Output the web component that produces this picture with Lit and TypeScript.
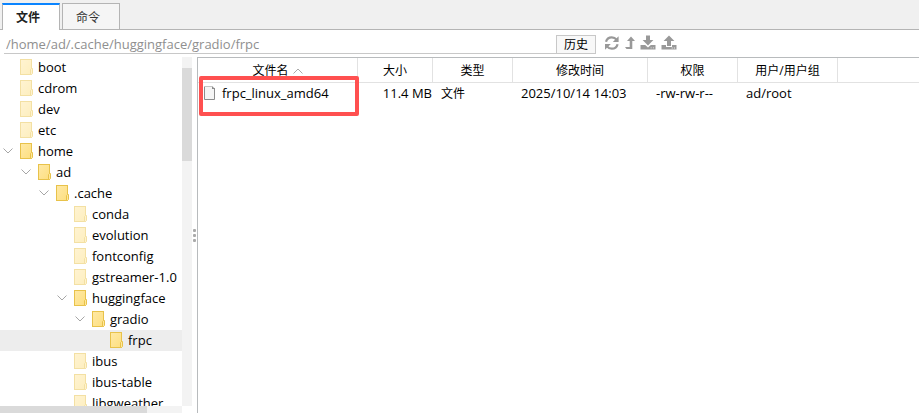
import { LitElement, html, css, svg } from "lit";
import { customElement, state } from "lit/decorators.js";
import { classMap } from "lit/directives/class-map.js";
import { styleMap } from "lit/directives/style-map.js";

interface TreeNode {
  name: string;
  depth: number;
  open?: boolean;
  visited?: boolean;
}

const NODES: TreeNode[] = [
  { name: "boot", depth: 0 },
  { name: "cdrom", depth: 0 },
  { name: "dev", depth: 0 },
  { name: "etc", depth: 0 },
  { name: "home", depth: 0, open: true, visited: true },
  { name: "ad", depth: 1, open: true, visited: true },
  { name: ".cache", depth: 2, open: true, visited: true },
  { name: "conda", depth: 3 },
  { name: "evolution", depth: 3 },
  { name: "fontconfig", depth: 3 },
  { name: "gstreamer-1.0", depth: 3 },
  { name: "huggingface", depth: 3, open: true, visited: true },
  { name: "gradio", depth: 4, open: true, visited: true },
  { name: "frpc", depth: 5, visited: true },
  { name: "ibus", depth: 3 },
  { name: "ibus-table", depth: 3 },
  { name: "libgweather", depth: 3 },
];

const chevron = html`<svg width="10" height="6" viewBox="0 0 10 6">
  <path d="M0.5 0.5 L5 5 L9.5 0.5" fill="none" stroke="#a6a6a6" />
</svg>`;

const folder = html`<svg width="13" height="16" viewBox="0 0 13 16">
  <defs>
    <linearGradient id="fold" x1="0" y1="0" x2="1" y2="1">
      <stop offset="0" stop-color="#ffe9a6" />
      <stop offset="1" stop-color="#fddf80" />
    </linearGradient>
  </defs>
  <rect x="0.5" y="0.5" width="11" height="15" fill="url(#fold)" stroke="#e8c24a" />
  <path d="M10.5 15.5 V10.5 L11.5 9.5 H12.5 V14.5 L11.5 15.5 Z" fill="#ffe89c" stroke="#e8c24a" />
</svg>`;

const toolIcon = (body: unknown, width = 16) =>
  html`<svg width=${width} height="16" viewBox="0 0 ${width} 16" fill="#999">${body}</svg>`;

const refreshIcon = toolIcon(svg`
  <path d="M2 6.8 C2.8 3.6 5 2.3 7.8 2.3 C9.8 2.3 11.4 3.1 12.6 4.6" fill="none" stroke="#999" stroke-width="2.2" />
  <path d="M14.6 1.2 V7 H8.8 Z" />
  <path d="M13.6 9.2 C12.8 12.4 10.6 13.7 7.8 13.7 C5.8 13.7 4.2 12.9 3 11.4" fill="none" stroke="#999" stroke-width="2.2" />
  <path d="M1 14.8 V9 H6.8 Z" />`);
const upIcon = toolIcon(svg`
  <path d="M6 1.5 L10 6 H7.3 V14 H1.5 L0 12 H4.7 V6 H2 Z" />`, 10);
const downloadIcon = toolIcon(svg`
  <path d="M6 0.5 H10 V5 H13.4 L8 10.4 L2.6 5 H6 Z" />
  <path d="M0.5 10 H5.2 L8 12.6 L10.8 10 H15.5 V14.6 H0.5 Z" />
  <path d="M10.7 12.4 H11.6 V13.3 H10.7 Z M12.9 12.4 H13.8 V13.3 H12.9 Z" fill="#fff" />`);
const uploadIcon = toolIcon(svg`
  <path d="M8 0.5 L13.4 6 H10 V11 H6 V6 H2.6 Z" />
  <path d="M0.5 10 H5 V12 H11 V10 H15.5 V14.6 H0.5 Z" />
  <path d="M10.7 12.6 H11.6 V13.5 H10.7 Z M12.9 12.6 H13.8 V13.5 H12.9 Z" fill="#fff" />`);

const base = css`
  * {
    box-sizing: border-box;
  }
  svg {
    display: block;
    flex: none;
  }
  button {
    font: inherit;
    color: inherit;
    padding: 0;
    border: 0;
    background: none;
  }
`;

@customElement("folder-tree")
export class FolderTree extends LitElement {
  @state() private selected = "frpc";

  static styles = [
    base,
    css`
      :host {
        display: grid;
        grid-template: minmax(0, 1fr) 7px / minmax(0, 1fr) 10px;
        width: 192px;
        min-height: 0;
      }
      .list {
        margin: 0;
        padding: 0;
        list-style: none;
        overflow: hidden;
      }
      .row {
        display: flex;
        align-items: center;
        width: 100%;
        height: 21px;
        padding-bottom: 1px;
        white-space: nowrap;
        text-align: left;
      }
      .row.selected {
        background: #ededed;
      }
      .toggle {
        flex: none;
        width: 17px;
      }
      .icon {
        flex: none;
        width: 18px;
        opacity: 0.5;
      }
      .icon.visited {
        opacity: 1;
      }
      .vtrack {
        background: #f3f3f3;
        padding-top: 11px;
      }
      .vthumb {
        height: 93px;
        background: #dadada;
      }
      .htrack {
        background: #f3f3f3;
      }
      .hthumb {
        width: 81%;
        height: 100%;
        background: #dadada;
      }
    `,
  ];

  render() {
    return html`
      <ul class="list" role="tree">
        ${NODES.map(
          (n) => html`<li role="none">
            <button
              role="treeitem"
              class=${classMap({ row: true, selected: n.name === this.selected })}
              style=${styleMap({ paddingLeft: `${3 + n.depth * 18}px` })}
              @click=${() => (this.selected = n.name)}
            >
              <span class="toggle">${n.open ? chevron : ""}</span>
              <span class=${classMap({ icon: true, visited: !!n.visited })}>${folder}</span>
              <span>${n.name}</span>
            </button>
          </li>`
        )}
      </ul>
      <div class="vtrack"><div class="vthumb"></div></div>
      <div class="htrack"><div class="hthumb"></div></div>
    `;
  }
}

@customElement("file-table")
export class FileTable extends LitElement {
  static styles = [
    base,
    css`
      :host {
        display: block;
        position: relative;
        min-width: 0;
        border-left: 1px solid #b8bbbd;
        border-top: 1px solid #b8bbbd;
      }
      table {
        width: 100%;
        table-layout: fixed;
        border-collapse: separate;
        border-spacing: 0;
      }
      th {
        height: 25px;
        padding: 2px 0 0;
        font-size: 12px;
        font-weight: 400;
        border-right: 1px solid #e2e2e2;
        border-bottom: 1px solid #e2e2e2;
      }
      th:last-child {
        border-right: 0;
      }
      td {
        height: 20px;
        padding: 0 0 0 8px;
        white-space: nowrap;
      }
      td.size {
        padding: 0 1px 0 0;
        text-align: right;
      }
      td.name {
        padding-left: 6px;
      }
      .c-name { width: 160px; }
      .c-size { width: 75px; }
      .c-type { width: 80px; }
      .c-time { width: 135px; }
      .c-perm { width: 90px; }
      .c-user { width: 100px; }
      td.cjk {
        padding-top: 2px;
        font-size: 12px;
        line-height: 18px;
      }
      .sort,
      .file {
        display: flex;
        align-items: center;
      }
      .sort {
        justify-content: center;
        gap: 4px;
      }
      .file {
        gap: 7px;
      }
      .highlight {
        position: absolute;
        left: 1px;
        top: 18px;
        width: 160px;
        height: 40px;
        border: 4px solid #ff5050;
        border-radius: 2px;
        pointer-events: none;
      }
    `,
  ];

  render() {
    return html`
      <table>
        <colgroup>
          <col class="c-name" /><col class="c-size" /><col class="c-type" />
          <col class="c-time" /><col class="c-perm" /><col class="c-user" /><col />
        </colgroup>
        <thead>
          <tr>
            <th>
              <span class="sort">文件名<svg width="10" height="6" viewBox="0 0 10 6">
                <path d="M0.5 5.5 L5 1 L9.5 5.5" fill="none" stroke="#aaa" />
              </svg></span>
            </th>
            <th>大小</th>
            <th>类型</th>
            <th>修改时间</th>
            <th>权限</th>
            <th>用户/用户组</th>
            <th></th>
          </tr>
        </thead>
        <tbody>
          <tr>
            <td class="name">
              <span class="file"><svg width="11" height="14" viewBox="0 0 11 14">
                <path d="M0 0 H9 L11 2 V14 H0 Z" fill="#f5f5f5" />
                <path d="M0.5 0 V13.5 H10.5 V2" fill="none" stroke="#8c8c8c" />
                <path d="M0 0.5 H8" fill="none" stroke="#c4c4c4" />
                <path d="M8 0 L11 3 H8 Z" fill="#8c8c8c" />
              </svg>frpc_linux_amd64</span>
            </td>
            <td class="size">11.4 MB</td>
            <td class="cjk">文件</td>
            <td>2025/10/14 14:03</td>
            <td>-rw-rw-r--</td>
            <td>ad/root</td>
            <td></td>
          </tr>
        </tbody>
      </table>
      <div class="highlight"></div>
    `;
  }
}

@customElement("app-root")
export class AppRoot extends LitElement {
  @state() private tab = "文件";

  static styles = [
    base,
    css`
      :host {
        display: flex;
        flex-direction: column;
        height: 100vh;
        overflow: hidden;
        background: #fff;
        color: #000;
        font: 13px/20px "Open Sans", "Noto Sans CJK SC", sans-serif;
      }
      .tabs {
        display: flex;
        flex: none;
        gap: 2px;
        height: 30px;
        padding: 3px 2px 0;
        background: #f0f0f0;
        box-shadow: inset 0 -1px #b4b4b4;
      }
      .tab {
        width: 58px;
        padding: 2px 6px 0 0;
        font-size: 12px;
        background: #f5f5f5;
        border: 1px solid #b4b4b4;
        color: #333;
      }
      .tab.active {
        padding-top: 0;
        background: #fff;
        color: #222;
        font-weight: 700;
        border-top: 2px solid #0a84ff;
        border-bottom: 0;
      }
      .bar {
        display: flex;
        flex: none;
        align-items: flex-end;
        height: 24px;
        margin-bottom: 3px;
        padding-left: 4px;
      }
      .path {
        width: 552px;
        height: 19px;
        padding: 0 2px 1px;
        border: 0;
        border-bottom: 1px solid #c8c8c8;
        outline: 0;
        background: none;
        font: inherit;
        color: #8f8f8f;
      }
      .history {
        width: 40px;
        height: 19px;
        border: 1px solid #c8c8c8;
        background: #f8f8f8;
        font-size: 12px;
        line-height: 16px;
      }
      .tools {
        display: flex;
        gap: 5px;
        padding: 0 0 3px 8px;
      }
      .main {
        display: grid;
        grid-template-columns: auto 5px minmax(0, 1fr);
        flex: 1;
        min-height: 0;
      }
      .splitter {
        display: flex;
        flex-direction: column;
        align-items: center;
        justify-content: center;
        gap: 2px;
      }
      .dot {
        width: 3px;
        height: 3px;
        border-radius: 1px;
        background: #aaa;
      }
    `,
  ];

  render() {
    return html`
      <nav class="tabs" role="tablist">
        ${["文件", "命令"].map(
          (t) => html`<button
            role="tab"
            class=${classMap({ tab: true, active: t === this.tab })}
            @click=${() => (this.tab = t)}
          >${t}</button>`
        )}
      </nav>
      <div class="bar">
        <input class="path" aria-label="路径" value="/home/ad/.cache/huggingface/gradio/frpc" />
        <button class="history">历史</button>
        <div class="tools">
          <button aria-label="刷新">${refreshIcon}</button>
          <button aria-label="上级">${upIcon}</button>
          <button aria-label="下载">${downloadIcon}</button>
          <button aria-label="上传">${uploadIcon}</button>
        </div>
      </div>
      <div class="main">
        <folder-tree></folder-tree>
        <div class="splitter">
          <span class="dot"></span><span class="dot"></span><span class="dot"></span>
        </div>
        <file-table></file-table>
      </div>
    `;
  }
}
